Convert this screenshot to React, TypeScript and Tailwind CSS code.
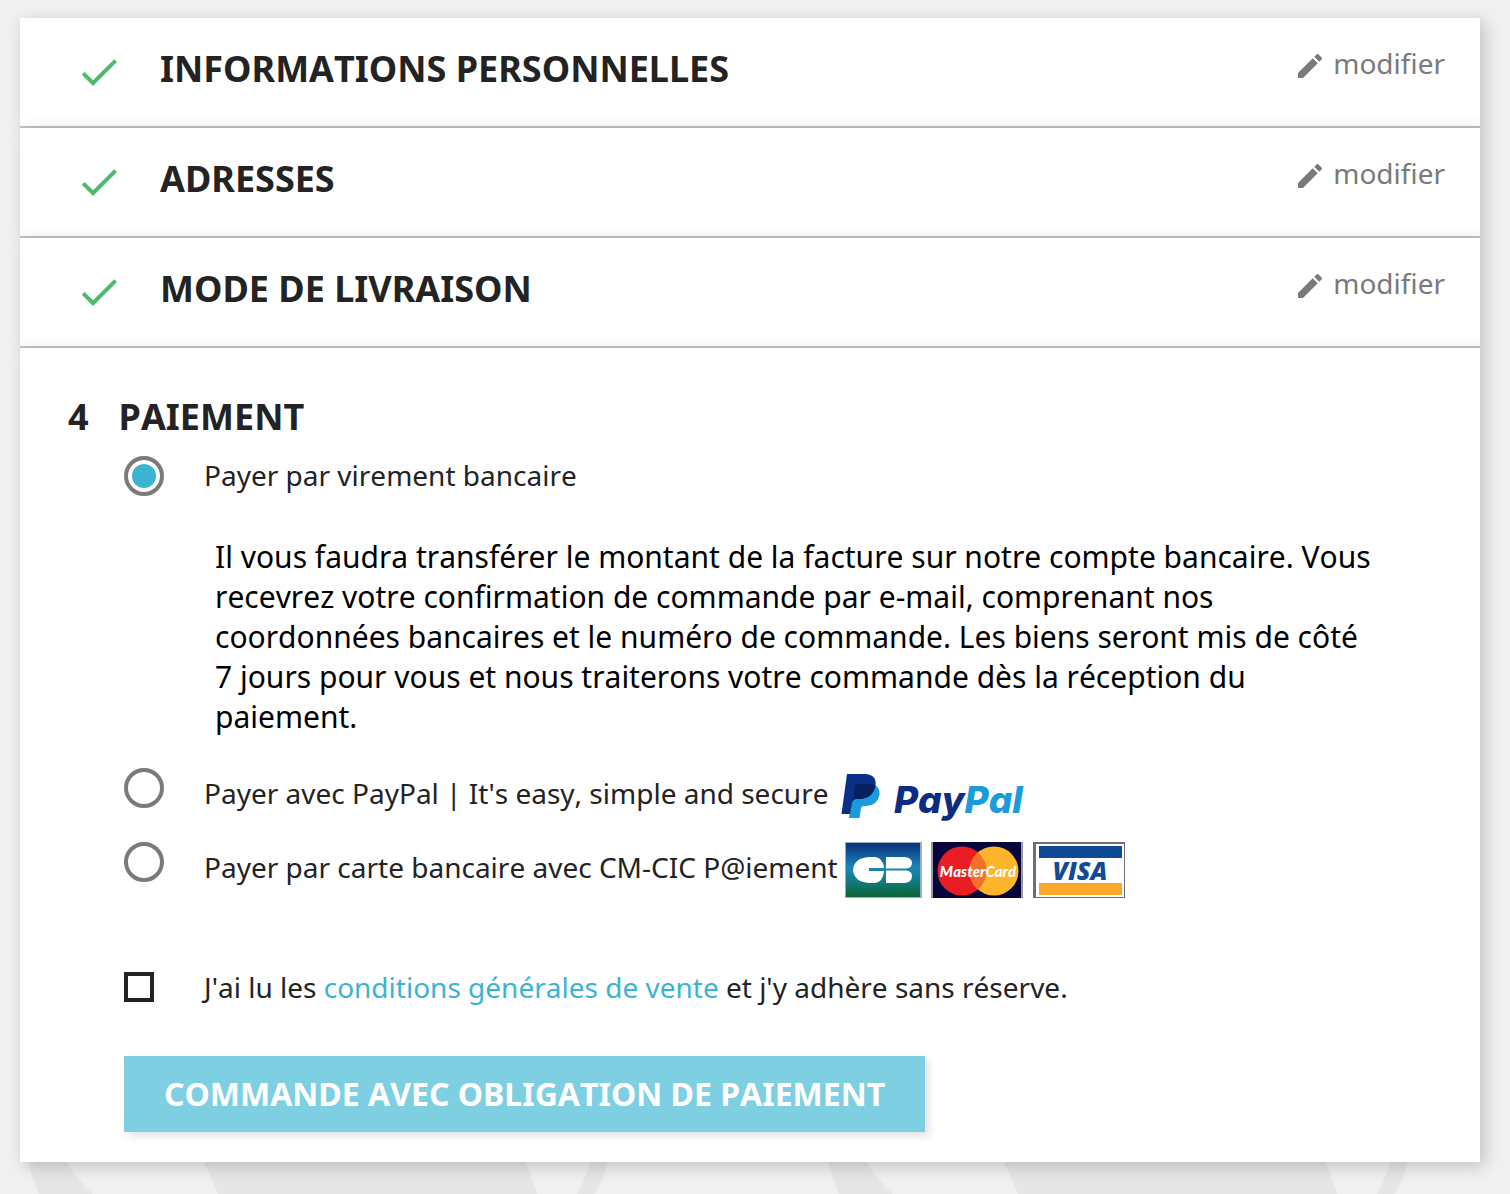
import { useState } from "react";

const doneSteps = ["Informations personnelles", "Adresses", "Mode de livraison"];

function CheckIcon() {
    return (
        <svg viewBox="0 0 24 24" className="size-12 shrink-0 fill-[#4cbb6c]" aria-hidden="true">
            <path d="M9 16.17L4.83 12l-1.42 1.41L9 19 21 7l-1.41-1.41z" />
        </svg>
    );
}

function PencilIcon() {
    return (
        <svg viewBox="0 0 24 24" className="mt-0.5 size-8 shrink-0 fill-current" aria-hidden="true">
            <path d="M3 17.25V21h3.75L17.81 9.94l-3.75-3.75L3 17.25zM20.71 7.04c.39-.39.39-1.02 0-1.41l-2.34-2.34c-.39-.39-1.02-.39-1.41 0l-1.83 1.83 3.75 3.75 1.83-1.83z" />
        </svg>
    );
}

function PaypalLogo() {
    return (
        <svg width="190" height="56" viewBox="0 0 190 56" role="img" aria-label="PayPal" className="inline-block align-middle">
            <path d="M13 50 L16 31 L39 17 Q44 20 43.500 27 Q41 38 30 38 L28 38 Q25.500 38 25 40 L23.500 50 Z" fill="#1a9bdc" />
            <path d="M11 6 L30 6 Q41 7 39.500 18 Q37 30 24 31 L20 31 Q17 31 16 35 L14 46 L5.500 46 Z" fill="#0a2f86" />
            <path d="M19.500 17 Q20 16 22 16 L33 16 Q37 16 39.500 17.500 Q37 30 24 31 L20 31 Q18 31 17 33 Z" fill="#05215f" />
            <text x="58" y="45" fontSize="37" fontWeight="800" fontStyle="italic" fontFamily="Inter, sans-serif">
                <tspan fill="#0c2c84">Pay</tspan>
                <tspan fill="#1a9bdc">Pal</tspan>
            </text>
        </svg>
    );
}

function CardLogos() {
    return (
        <svg width="280" height="56" viewBox="0 0 280 56" role="img" aria-label="CB, MasterCard, Visa" className="inline-block align-middle">
            <defs>
                <linearGradient id="cb" x1="0" y1="0" x2="0" y2="1">
                    <stop offset="0" stopColor="#0c2f7c" />
                    <stop offset="0.45" stopColor="#1b86b8" />
                    <stop offset="0.7" stopColor="#137a84" />
                    <stop offset="1" stopColor="#0a6433" />
                </linearGradient>
            </defs>
            {/* CB */}
            <rect width="77" height="56" fill="#9ab0bd" />
            <rect x="1" y="1" width="74" height="54" fill="url(#cb)" />
            <path d="M24 15 H30 Q38 16 39 26 H24 V29 H39 Q38 40 30 41 H24 Q9 40 8 28 Q9 16 24 15 Z" fill="#fff" />
            <path d="M41 15 H60 Q67 16 67 21 Q67 26 61 26.500 H41 Z M41 28.500 H61 Q67 29 67 34 Q67 40 60 41 H41 Z" fill="#fff" />
            {/* MasterCard */}
            <rect x="86" width="92" height="56" fill="#9a98ac" />
            <rect x="88" width="88" height="56" fill="#07053a" />
            <circle cx="117" cy="29" r="24.500" fill="#ea1c24" />
            <circle cx="149" cy="29" r="24.500" fill="#fdb62b" />
            <path d="M133 10.400 A24.500 24.500 0 0 1 133 47.600 A24.500 24.500 0 0 1 133 10.400 Z" fill="#f3702a" />
            <text x="133" y="35" textAnchor="middle" fontSize="15" fontWeight="900" fontStyle="italic" fill="#fff" fontFamily="Lato, sans-serif">
                MasterCard
            </text>
            {/* Visa */}
            <rect x="188" width="92" height="56" fill="#6d6d80" />
            <rect x="191" y="2" width="88" height="53" fill="#fff" />
            <rect x="194" y="4" width="83" height="12" fill="#0f4a97" />
            <rect x="194" y="41" width="83" height="12" fill="#fca72a" />
            <text x="235" y="38" textAnchor="middle" fontSize="25" fontWeight="800" fontStyle="italic" fill="#134a96" fontFamily="'Open Sans', sans-serif">
                VISA
            </text>
        </svg>
    );
}

// Grey curves repeated along the bottom of the page
function PagePattern() {
    return (
        <svg className="absolute bottom-0 left-0 h-8 w-full" aria-hidden="true">
            <defs>
                <pattern id="curves" width="800" height="32" patternUnits="userSpaceOnUse">
                    <path d="M28 0 H67 Q77 18 93 32 H39 Q32 15 28 0 Z" fill="#e6e6e6" />
                    <path d="M204 0 H526 L537 32 H218 Z" fill="#e6e6e6" />
                    <path d="M590 0 H608 Q604 16 595 32 H577 Q586 16 590 0 Z" fill="#e6e6e6" />
                </pattern>
            </defs>
            <rect width="100%" height="32" fill="url(#curves)" />
        </svg>
    );
}

const radioClass =
    "size-10 shrink-0 appearance-none rounded-full border-4 border-[#7a7a7a] bg-clip-content p-1 checked:bg-[#3ab4d1]";
const labelClass = "text-[28px] leading-[38px]";
const panelShadow = "shadow-[4px_4px_16px_rgba(0,0,0,0.2)]";

export default function App() {
    const [payment, setPayment] = useState("virement");
    const [accepted, setAccepted] = useState(false);

    return (
        <div className="relative min-h-screen bg-[#f0f0f0] pt-[18px] pr-[30px] pb-8 pl-5 font-['Noto_Sans',sans-serif] text-[#232323] [font-kerning:none]">
            <PagePattern />
            <main className="relative">
                {doneSteps.map((step) => (
                    <section
                        key={step}
                        className={`flex items-start border-b-2 border-[#c2c2c2] bg-white pt-[30px] pr-[35px] pb-[30px] pl-[55px] ${panelShadow}`}
                    >
                        <CheckIcon />
                        <h1 className="ml-[37px] flex-1 text-4xl leading-[42px] font-bold uppercase">{step}</h1>
                        <a href="#" className="flex items-start gap-[7px] text-[28px] leading-[30px] text-[#7a7a7a]">
                            <PencilIcon />
                            modifier
                        </a>
                    </section>
                ))}

                <section className={`bg-white pt-12 pr-[104px] pb-[30px] pl-12 ${panelShadow}`}>
                    <h1 className="flex gap-[30px] text-4xl leading-[42px] font-bold uppercase">
                        <span>4</span>
                        Paiement
                    </h1>

                    <form className="mt-[18px] pl-14" onSubmit={(e) => e.preventDefault()}>
                        <div className="flex items-start gap-10">
                            <input
                                type="radio"
                                id="virement"
                                name="payment"
                                className={radioClass}
                                checked={payment === "virement"}
                                onChange={() => setPayment("virement")}
                            />
                            <label htmlFor="virement" className={labelClass}>
                                Payer par virement bancaire
                            </label>
                        </div>

                        <p className="mt-[41px] ml-[91px] text-[30px] leading-10 text-black">
                            Il vous faudra transférer le montant de la facture sur notre compte bancaire. Vous
                            recevrez votre confirmation de commande par e-mail, comprenant nos coordonnées
                            bancaires et le numéro de commande. Les biens seront mis de côté 7 jours pour vous et
                            nous traiterons votre commande dès la réception du paiement.
                        </p>

                        <div className="mt-[31px] flex items-start gap-10">
                            <input
                                type="radio"
                                id="paypal"
                                name="payment"
                                className={radioClass}
                                checked={payment === "paypal"}
                                onChange={() => setPayment("paypal")}
                            />
                            <label htmlFor="paypal" className={labelClass}>
                                Payer avec PayPal | It's easy, simple and secure <PaypalLogo />
                            </label>
                        </div>

                        <div className="mt-[18px] flex items-start gap-10">
                            <input
                                type="radio"
                                id="carte"
                                name="payment"
                                className={radioClass}
                                checked={payment === "carte"}
                                onChange={() => setPayment("carte")}
                            />
                            <label htmlFor="carte" className={labelClass}>
                                Payer par carte bancaire avec CM-CIC P@iement <CardLogos />
                            </label>
                        </div>

                        <div className="mt-[70px] flex items-center gap-[50px]">
                            <input
                                type="checkbox"
                                id="conditions"
                                className="size-[30px] shrink-0 appearance-none border-4 border-[#232323] bg-clip-content p-1 checked:bg-[#232323]"
                                checked={accepted}
                                onChange={(e) => setAccepted(e.target.checked)}
                            />
                            <label htmlFor="conditions" className={labelClass}>
                                J'ai lu les{" "}
                                <a href="#" className="text-[#3ab4d1]">
                                    conditions générales de vente
                                </a>{" "}
                                et j'y adhère sans réserve.
                            </label>
                        </div>

                        <button
                            type="submit"
                            disabled={!accepted}
                            className="mt-[50px] bg-[#2fb5d2] px-10 py-[18px] text-[32px] leading-10 font-bold text-white uppercase shadow-[4px_4px_8px_rgba(0,0,0,0.12)] disabled:bg-[#7fcfe2]"
                        >
                            Commande avec obligation de paiement
                        </button>
                    </form>
                </section>
            </main>
        </div>
    );
}
